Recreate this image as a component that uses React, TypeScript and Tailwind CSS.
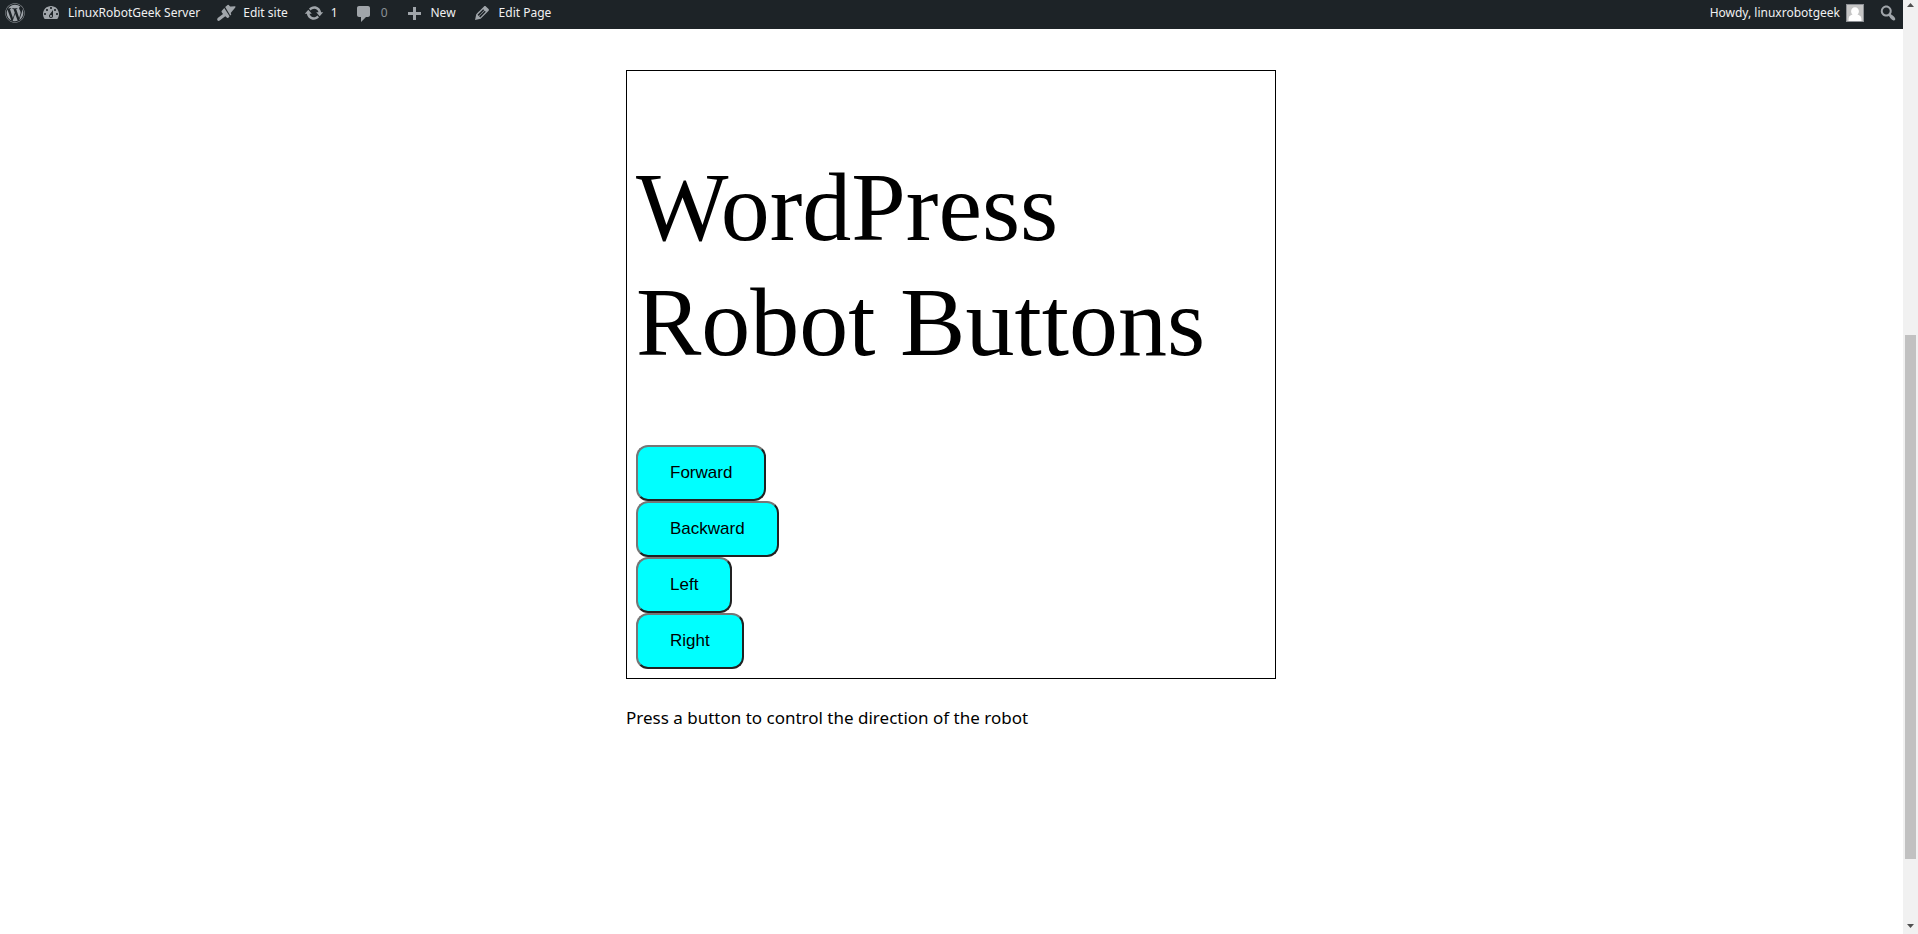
import type { ReactNode } from "react";
import { FaWordpress } from "react-icons/fa";

const icons = {
  dashboard:
    "M3.76 16h12.48c1.1-1.37 1.76-3.11 1.76-5 0-4.42-3.58-8-8-8s-8 3.58-8 8c0 1.89.66 3.63 1.76 5zM10 4c.55 0 1 .45 1 1s-.45 1-1 1-1-.45-1-1 .45-1 1-1zM6 6c.55 0 1 .45 1 1s-.45 1-1 1-1-.45-1-1 .45-1 1-1zm8 0c.55 0 1 .45 1 1s-.45 1-1 1-1-.45-1-1 .45-1 1-1zm-5.37 5.55L12 7v6c0 1.1-.9 2-2 2s-2-.9-2-2c0-.57.24-1.08.63-1.45zM4 10c.55 0 1 .45 1 1s-.45 1-1 1-1-.45-1-1 .45-1 1-1zm12 0c.55 0 1 .45 1 1s-.45 1-1 1-1-.45-1-1 .45-1 1-1zm-5 3c0-.55-.45-1-1-1s-1 .45-1 1 .45 1 1 1 1-.45 1-1z",
  brush:
    "M9.2 4L11.600 1.900Q12.200 1.500 12.800 2.100L13.600 3Q14.200 3.500 15 3.500L18.800 3.300Q20 3.400 19.300 4.400L14.700 9.900L15.300 11.400L14.200 12.400ZM8.300 4.900L13.600 13.300L12.400 14.800Q11.700 15.300 11 14.700L9.300 13.200L3.700 17.500Q2.300 18.400 1.400 17.300Q.7 16.300 1.700 15.100L7 10.900L5.700 9.200Q5.200 8.400 5.800 7.700Z",
  update:
    "M10.2 3.28c3.53 0 6.43 2.61 6.92 6h2.08l-3.5 4-3.5-4h2.32c-.45-1.97-2.21-3.45-4.32-3.45-1.45 0-2.73.71-3.54 1.78L4.95 5.66C6.23 4.2 8.11 3.28 10.2 3.28zm-.4 13.44c-3.52 0-6.43-2.61-6.92-6H.8l3.5-4c1.17 1.33 2.33 2.67 3.5 4H5.48c.45 1.97 2.21 3.45 4.32 3.45 1.45 0 2.73-.71 3.54-1.78l1.71 1.95c-1.28 1.46-3.15 2.38-5.25 2.38z",
  comment:
    "M5 3h9c1.1 0 2 .9 2 2v7c0 1.1-.9 2-2 2h-2l-5 5v-5H5c-1.1 0-2-.9-2-2V5c0-1.1.9-2 2-2z",
  plus: "M17 9v3h-5v5H9v-5H4V9h5V4h3v5h5z",
  edit: "M13.89 3.39l2.71 2.72c.46.46.42 1.24.03 1.64l-8.01 8.02-5.56 1.16 1.16-5.58s7.6-7.63 7.99-8.03c.39-.39 1.22-.39 1.68.07zm-2.73 2.79l-5.59 5.61 1.11 1.11 5.54-5.65zm-2.97 8.23l5.58-5.6-1.07-1.08-5.59 5.6z",
  search:
    "M12.14 4.18c1.87 1.87 2.11 4.75.72 6.89.12.1.22.21.36.31.2.16.47.36.81.59.34.24.56.39.66.47.42.31.73.57.94.78.32.32.6.65.84 1 .25.35.44.69.59 1.04.14.35.21.68.18 1-.02.32-.14.59-.36.81s-.49.34-.81.36c-.31.02-.65-.04-.99-.19-.35-.14-.7-.34-1.04-.59-.35-.24-.68-.52-1-.84-.21-.21-.47-.52-.77-.93-.1-.13-.25-.35-.47-.66-.22-.32-.4-.57-.56-.78-.16-.2-.29-.35-.44-.5-2.07 1.09-4.69.76-6.44-.98-2.14-2.15-2.14-5.64 0-7.78 2.15-2.15 5.63-2.15 7.78 0zm-1.41 6.36c1.36-1.37 1.36-3.58 0-4.95-1.37-1.37-3.59-1.37-4.95 0-1.37 1.37-1.37 3.58 0 4.95 1.36 1.37 3.58 1.37 4.95 0z",
};

function Icon({ name }: { name: keyof typeof icons }) {
  return (
    <svg viewBox="0 0 20 20" className="size-5 shrink-0 fill-[#a0a5aa]" aria-hidden="true">
      <path fillRule="evenodd" d={icons[name]} />
    </svg>
  );
}

function BarLink({ icon, children }: { icon: keyof typeof icons; children: ReactNode }) {
  return (
    <a href="#" className="flex items-center gap-[7px] whitespace-nowrap">
      <Icon name={icon} />
      {children}
    </a>
  );
}

function AdminBar() {
  return (
    <header className="flex h-[29px] items-center justify-between bg-[#1d2327] px-[5px] pb-[3px] font-['Noto_Sans',sans-serif] text-[12px] leading-[18px] text-[#f0f0f1]">
      <nav className="flex items-center gap-4" aria-label="Toolbar">
        <a href="#" aria-label="About WordPress" className="text-[#a0a5aa]">
          <FaWordpress className="size-5" />
        </a>
        <BarLink icon="dashboard">LinuxRobotGeek Server</BarLink>
        <BarLink icon="brush">Edit site</BarLink>
        <BarLink icon="update">1</BarLink>
        <BarLink icon="comment">
          <span className="text-[#8c9196]">0</span>
        </BarLink>
        <BarLink icon="plus">New</BarLink>
        <BarLink icon="edit">Edit Page</BarLink>
      </nav>
      <div className="flex items-center gap-[14px]">
        <a href="#" className="flex items-center gap-[6px] whitespace-nowrap">
          Howdy, linuxrobotgeek
          <svg viewBox="0 0 18 18" className="size-[18px]" aria-hidden="true">
            <rect width="18" height="18" fill="#c5c5c5" />
            <path
              fill="#fff"
              d="M9 3.2c2.3 0 3.9 1.7 3.9 4 0 1.500-.6 2.700-1.500 3.400 1.800.6 3.500 1.300 3.900 3.400l.2 3H2.500l.2-3c.4-2.100 2.100-2.800 3.900-3.400C5.700 9.900 5.100 8.700 5.100 7.200c0-2.300 1.600-4 3.900-4z"
            />
            <rect x=".5" y=".5" width="17" height="17" fill="none" stroke="#8c8f94" />
          </svg>
        </a>
        <button type="button" aria-label="Search">
          <Icon name="search" />
        </button>
      </div>
    </header>
  );
}

function ScrollBar() {
  return (
    <div className="flex flex-col items-center justify-between bg-[#f1f1f1] pb-[6px] pt-[3px]" aria-hidden="true">
      <svg viewBox="0 0 7 4" className="h-1 w-[7px] fill-[#505050]">
        <path d="M0 4h7L3.500 0z" />
      </svg>
      <div className="flex w-full grow flex-col px-[2px]">
        <div className="grow-[328]" />
        <div className="grow-[524] bg-[#c1c1c1]" />
        <div className="grow-[65]" />
      </div>
      <svg viewBox="0 0 7 4" className="h-1 w-[7px] fill-[#505050]">
        <path d="M0 0h7L3.500 4z" />
      </svg>
    </div>
  );
}

const directions = ["Forward", "Backward", "Left", "Right"];

export default function App() {
  return (
    <div className="grid min-h-screen grid-cols-[1fr_15px] bg-white text-black">
      <div>
        <AdminBar />
        <div className="pr-px">
          <main className="mx-auto max-w-[650px] pt-[41px]">
            <section className="border border-black p-[9px]">
              <h1 className="pb-[65px] pt-[70px] font-['Liberation_Serif',serif] text-[98px] leading-[115px]">
                WordPress Robot Buttons
              </h1>
              <div className="flex flex-col items-start">
                {directions.map((direction) => (
                  <button
                    key={direction}
                    type="button"
                    className="h-14 rounded-[12px] border-2 border-b-[#212121] border-l-[#767676] border-r-[#212121] border-t-[#767676] bg-[#00ffff] px-8 font-['Liberation_Sans',sans-serif] text-[17px] leading-5"
                  >
                    {direction}
                  </button>
                ))}
              </div>
            </section>
            <p className="pt-6 font-['Noto_Sans',sans-serif] text-[17px] leading-[30px]">
              Press a button to control the direction of the robot
            </p>
          </main>
        </div>
      </div>
      <ScrollBar />
    </div>
  );
}
